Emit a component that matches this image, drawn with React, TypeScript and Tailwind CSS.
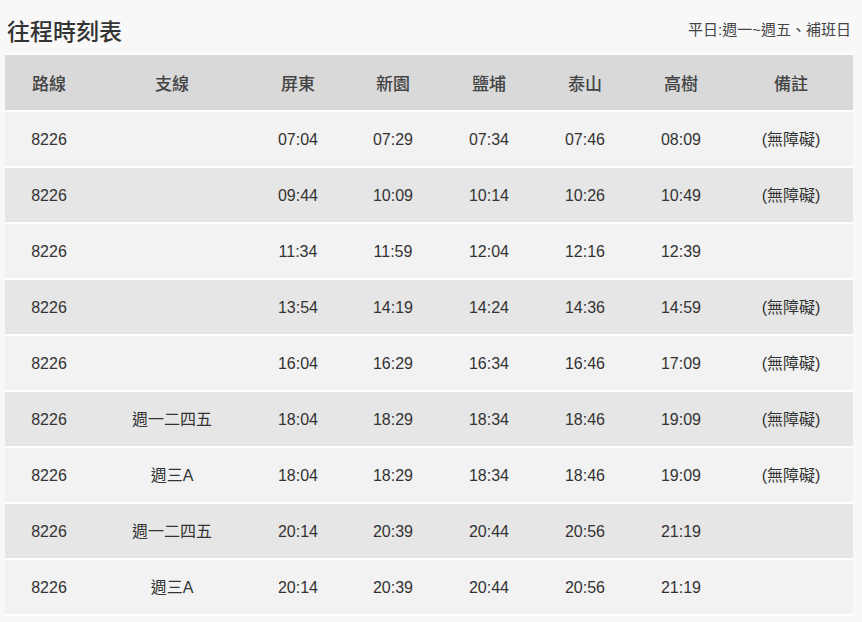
import React from "react";

const stations = ["屏東", "新園", "鹽埔", "泰山", "高樹"];

const rows = [
  { route: "8226", branch: "", times: ["07:04", "07:29", "07:34", "07:46", "08:09"], note: "(無障礙)" },
  { route: "8226", branch: "", times: ["09:44", "10:09", "10:14", "10:26", "10:49"], note: "(無障礙)" },
  { route: "8226", branch: "", times: ["11:34", "11:59", "12:04", "12:16", "12:39"], note: "" },
  { route: "8226", branch: "", times: ["13:54", "14:19", "14:24", "14:36", "14:59"], note: "(無障礙)" },
  { route: "8226", branch: "", times: ["16:04", "16:29", "16:34", "16:46", "17:09"], note: "(無障礙)" },
  { route: "8226", branch: "週一二四五", times: ["18:04", "18:29", "18:34", "18:46", "19:09"], note: "(無障礙)" },
  { route: "8226", branch: "週三A", times: ["18:04", "18:29", "18:34", "18:46", "19:09"], note: "(無障礙)" },
  { route: "8226", branch: "週一二四五", times: ["20:14", "20:39", "20:44", "20:56", "21:19"], note: "" },
  { route: "8226", branch: "週三A", times: ["20:14", "20:39", "20:44", "20:56", "21:19"], note: "" },
];

const App = () => {
  return (
    <div className="min-h-[622px] w-full bg-[#f8f8f8] font-['Liberation_Sans','Noto_Sans_CJK_TC',sans-serif] text-[#333]">
      {/* Title */}
      <div className="flex h-[53px] items-center justify-between pl-[7px] pr-[11px] pt-[8px]">
        <h1 className="font-['Noto_Sans_CJK_TC',sans-serif] text-[23px] font-medium text-[#333]">
          往程時刻表
        </h1>
        <span className="text-[15px] text-[#444]">平日:週一~週五、補班日</span>
      </div>

      {/* Timetable */}
      <table className="ml-[5px] w-[848px] table-fixed border-separate border-spacing-x-0 border-spacing-y-[2px] bg-white">
        <colgroup>
          <col className="w-[88px]" />
          <col className="w-[158px]" />
          <col className="w-[94px]" />
          <col className="w-[96px]" />
          <col className="w-[96px]" />
          <col className="w-[96px]" />
          <col className="w-[96px]" />
          <col className="w-[124px]" />
        </colgroup>
        <thead>
          <tr className="h-[55px] bg-[#d9d9d9] font-['Noto_Sans_CJK_TC',sans-serif] text-[17px] font-medium text-[#444]">
            <th className="font-medium">路線</th>
            <th className="font-medium">支線</th>
            {stations.map((s) => (
              <th key={s} className="font-medium">
                {s}
              </th>
            ))}
            <th className="font-medium">備註</th>
          </tr>
        </thead>
        <tbody>
          {rows.map((row, index) => {
            return (
              <tr
                key={index}
                className={`h-[54px] text-center text-[16px] ${index % 2 === 0 ? "bg-[#f2f2f2]" : "bg-[#e6e6e6]"}`}
              >
                <td className="pt-[2px]">{row.route}</td>
                <td className="pt-[2px]">{row.branch}</td>
                {row.times.map((t, i) => (
                  <td key={i} className="pt-[2px]">
                    {t}
                  </td>
                ))}
                <td className="pt-[2px]">{row.note}</td>
              </tr>
            );
          })}
        </tbody>
      </table>
    </div>
  );
};

export default App;
